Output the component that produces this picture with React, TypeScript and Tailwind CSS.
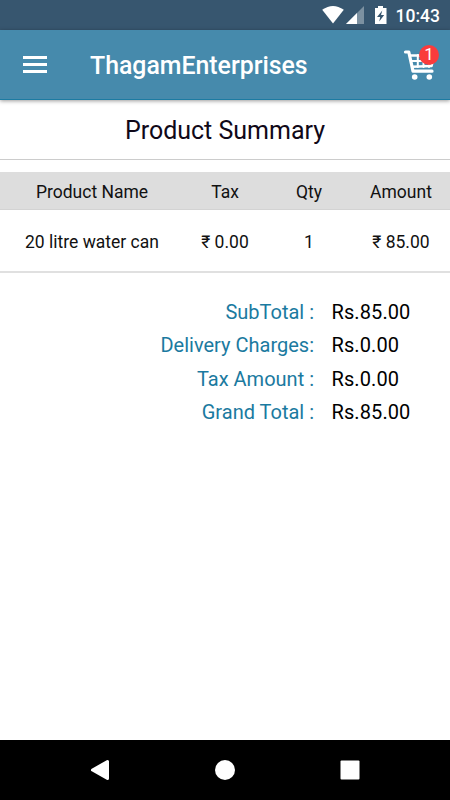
import React from 'react';

const columns = 'grid grid-cols-[184px_82px_86px_98px] items-center text-center text-[17.5px] text-[#111]';

const totals = [
  { label: 'SubTotal :', value: 'Rs.85.00' },
  { label: 'Delivery Charges:', value: 'Rs.0.00' },
  { label: 'Tax Amount :', value: 'Rs.0.00' },
  { label: 'Grand Total :', value: 'Rs.85.00' },
];

function StatusBar() {
  return (
    <div className="flex h-[30px] items-center justify-end bg-[#37566f] pr-[10px] text-white">
      <svg width="70" height="30" viewBox="0 0 70 30" fill="#fff">
        <path d="M2.2 9.8 Q13 2 23.8 9.8 L13 23.6Z" />
        <path d="M44 6V24H26Z" opacity=".35" />
        <path d="M37 13V24H26Z" />
        <path d="M55 8h3V6h5v2H66.500v16H55Z" />
        <path d="M62.300 10.500L57 17h3.200l-1 4.500 5-6.500H61Z" fill="#37566f" />
      </svg>
      <span className="ml-[6px] pt-px text-[17.5px] leading-[30px] font-medium">10:43</span>
    </div>
  );
}

function CartButton() {
  return (
    <button className="relative h-[36px] w-[40px]" aria-label="Cart">
      <svg width="40" height="36" viewBox="0 0 40 36" fill="none" stroke="#fff" strokeLinecap="round" strokeLinejoin="round">
        <path d="M5.500 5H8.800L13 24.200H32" strokeWidth="3.200" />
        <path d="M10 8.500H34L31.500 19L12.500 19.800" strokeWidth="2.600" />
        <path d="M12 14H33M17.800 8V20M23.500 8V20M29 8V20" strokeWidth="2" />
        <circle cx="14.700" cy="30" r="2.800" fill="#fff" stroke="none" />
        <circle cx="29.300" cy="30" r="2.800" fill="#fff" stroke="none" />
      </svg>
      <span className="absolute top-[-2px] left-[19px] flex size-5 items-center justify-center rounded-full bg-[#fa3b3c] text-[17px] leading-none text-white">1</span>
    </button>
  );
}

export default function App() {
  return (
    <div className="flex h-[800px] w-[450px] flex-col overflow-hidden bg-white font-[Roboto,'Noto_Sans',sans-serif]">
      <StatusBar />
      <header className="flex h-[70px] shrink-0 items-center border-b border-[#1c7ba2] bg-[#468aac] pr-[10px] pl-[23px] shadow-[0_1px_4px_rgba(0,0,0,0.4)]">
        <div className="flex w-6 flex-col gap-[4px]">
          <div className="h-[3px] bg-white" />
          <div className="h-[3px] bg-white" />
          <div className="h-[3px] bg-white" />
        </div>
        <h1 className="ml-[43px] flex-1 pt-[3px] text-[24.85px] font-medium whitespace-nowrap text-white">ThagamEnterprises</h1>
        <CartButton />
      </header>
      <main className="flex-1">
        <h2 className="flex h-[60px] items-center justify-center border-b border-[#ccc] pt-[3px] text-[25px] text-[#100818]">
          Product Summary
        </h2>
        <div className={`${columns} mt-[12px] h-[38px] border-b border-[#d3d3d3] bg-[#ddd] pt-[3px]`}>
          <span>Product Name</span>
          <span>Tax</span>
          <span>Qty</span>
          <span>Amount</span>
        </div>
        <div className={`${columns} h-[63px] border-b-2 border-[#e0e0e0] pt-[3px]`}>
          <span>20 litre water can</span>
          <span>₹ 0.00</span>
          <span>1</span>
          <span>₹ 85.00</span>
        </div>
        <dl className="mt-[22.3px]">
          {totals.map((row) => (
            <div key={row.label} className="flex h-[33.350px] items-center text-[20px]">
              <dt className="w-[314px] text-right text-[#1b7aa0]">{row.label}</dt>
              <dd className="ml-[17.5px] tracking-[0.1px] text-black">{row.value}</dd>
            </div>
          ))}
        </dl>
      </main>
      <nav className="h-[60px] bg-black">
        <svg width="450" height="60" fill="#fff" stroke="#fff" strokeLinejoin="round">
          <path d="M92.500 30L107.500 21.500V38.500Z" strokeWidth="3" />
          <circle cx="225" cy="30" r="10" stroke="none" />
          <rect x="340.500" y="20.500" width="19" height="19" rx="1" stroke="none" />
        </svg>
      </nav>
    </div>
  );
}
